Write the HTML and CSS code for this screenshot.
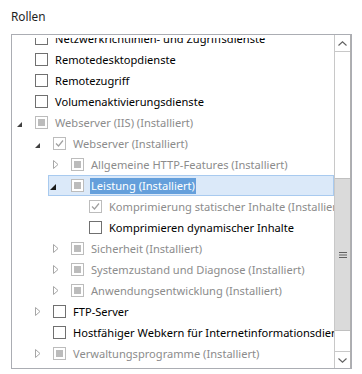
FILE: index.html
```html
<!DOCTYPE html>
<html>
<head>
<meta charset="utf-8">
<link rel="stylesheet" href="styles.css">
</head>
<body>
<div class="panel">
  <div class="title">Rollen</div>
  <div class="box">
    <div class="tree">
      <ul class="rows">
        <li class="row l1"><span class="exp"></span><span class="cb"></span><span class="label">Netzwerkrichtlinien- und Zugriffsdienste</span></li>
        <li class="row l1"><span class="exp"></span><span class="cb"></span><span class="label">Remotedesktopdienste</span></li>
        <li class="row l1"><span class="exp"></span><span class="cb"></span><span class="label">Remotezugriff</span></li>
        <li class="row l1"><span class="exp"></span><span class="cb"></span><span class="label">Volumenaktivierungsdienste</span></li>
        <li class="row l1 dis"><span class="exp"><svg class="open" width="5" height="5" viewBox="0 0 5 5"><polygon points="5,0 5,5 0,5"/></svg></span><span class="cb ind"></span><span class="label">Webserver (IIS) (Installiert)</span></li>
        <li class="row l2 dis"><span class="exp"><svg class="open" width="5" height="5" viewBox="0 0 5 5"><polygon points="5,0 5,5 0,5"/></svg></span><span class="cb chk"><svg width="11" height="11" viewBox="0 0 11 11"><polyline points="2,5.5 4.5,8 9,2.5" fill="none" stroke="#a0a0a0" stroke-width="1.2"/></svg></span><span class="label">Webserver (Installiert)</span></li>
        <li class="row l3 dis"><span class="exp"><svg class="closed" width="6" height="9" viewBox="0 0 6 9"><polygon points="0.5,0.5 5,4.5 0.5,8.5"/></svg></span><span class="cb ind"></span><span class="label">Allgemeine HTTP-Features (Installiert)</span></li>
        <li class="row l3 dis sel"><span class="exp"><svg class="open big" width="6" height="6" viewBox="0 0 6 6"><polygon points="6,0 6,6 0,6"/></svg></span><span class="cb ind"></span><span class="label">Leistung (Installiert)</span></li>
        <li class="row l4 dis"><span class="exp"></span><span class="cb chk"><svg width="11" height="11" viewBox="0 0 11 11"><polyline points="2,5.5 4.5,8 9,2.5" fill="none" stroke="#a0a0a0" stroke-width="1.2"/></svg></span><span class="label">Komprimierung statischer Inhalte (Installiert)</span></li>
        <li class="row l4"><span class="exp"></span><span class="cb"></span><span class="label">Komprimieren dynamischer Inhalte</span></li>
        <li class="row l3 dis"><span class="exp"><svg class="closed" width="6" height="9" viewBox="0 0 6 9"><polygon points="0.5,0.5 5,4.5 0.5,8.5"/></svg></span><span class="cb ind"></span><span class="label">Sicherheit (Installiert)</span></li>
        <li class="row l3 dis"><span class="exp"><svg class="closed" width="6" height="9" viewBox="0 0 6 9"><polygon points="0.5,0.5 5,4.5 0.5,8.5"/></svg></span><span class="cb ind"></span><span class="label">Systemzustand und Diagnose (Installiert)</span></li>
        <li class="row l3 dis"><span class="exp"><svg class="closed" width="6" height="9" viewBox="0 0 6 9"><polygon points="0.5,0.5 5,4.5 0.5,8.5"/></svg></span><span class="cb ind"></span><span class="label">Anwendungsentwicklung (Installiert)</span></li>
        <li class="row l2"><span class="exp"><svg class="closed" width="6" height="9" viewBox="0 0 6 9"><polygon points="0.5,0.5 5,4.5 0.5,8.5"/></svg></span><span class="cb"></span><span class="label">FTP-Server</span></li>
        <li class="row l2"><span class="exp"></span><span class="cb"></span><span class="label">Hostfähiger Webkern für Internetinformationsdienste</span></li>
        <li class="row l2 dis"><span class="exp"><svg class="closed" width="6" height="9" viewBox="0 0 6 9"><polygon points="0.5,0.5 5,4.5 0.5,8.5"/></svg></span><span class="cb ind"></span><span class="label">Verwaltungsprogramme (Installiert)</span></li>
      </ul>
    </div>
    <div class="scrollbar">
      <div class="sbtn up"><svg width="9" height="5" viewBox="0 0 9 5"><polyline points="0.5,4.5 4.5,0.8 8.5,4.5" fill="none" stroke="#606060" stroke-width="1.1"/></svg></div>
      <div class="track">
        <div class="gap-top"></div>
        <div class="thumb"><svg width="8" height="6" viewBox="0 0 8 6"><rect x="0" y="0" width="8" height="1" fill="#606060"/><rect x="0" y="2.5" width="8" height="1" fill="#606060"/><rect x="0" y="5" width="8" height="1" fill="#606060"/></svg></div>
        <div class="gap-bottom"></div>
      </div>
      <div class="sbtn down"><svg width="9" height="5" viewBox="0 0 9 5"><polyline points="0.5,0.5 4.5,4.2 8.5,0.5" fill="none" stroke="#606060" stroke-width="1.1"/></svg></div>
    </div>
  </div>
</div>
</body>
</html>
```

FILE: styles.css
```css
* { box-sizing: border-box; }
body {
  margin: 0;
  background: #ffffff;
  font-family: "Noto Sans", "Open Sans", "DejaVu Sans", sans-serif;
  font-size: 11.1px;
  color: #000;
}
.panel {
  padding: 8px 0 0 11px;
  width: 352px;
}
.title {
  height: 26px;
  line-height: 16px;
  color: #1e1e1e;
  font-size: 11.8px;
}
.box {
  width: 341px;
  height: 335px;
  border: 1px solid #abadb3;
  display: flex;
  background: #fff;
}
.tree {
  flex: 1;
  overflow: hidden;
  margin-top: 3px;
}
.rows {
  list-style: none;
  margin: -10px 0 0;
  padding: 0;
}
.row {
  height: 21px;
  display: flex;
  align-items: center;
  white-space: nowrap;
  overflow: hidden;
}
.l2 { margin-left: 18px; }
.l3 { margin-left: 36px; }
.l4 { margin-left: 54px; }
.exp {
  width: 23px;
  height: 21px;
  flex: none;
  display: flex;
  align-items: center;
  padding-left: 5px;
}
.exp svg.open { fill: #404040; margin-top: 3px; }
.exp svg.open.big { fill: #1a1a1a; margin-left: -3px; margin-top: 2px; }
.exp svg.closed { fill: none; stroke: #a6a6a6; stroke-width: 1; }
.cb {
  width: 13px;
  height: 13px;
  flex: none;
  border: 1px solid #707070;
  background: #fff;
  margin-right: 7px;
  display: flex;
  align-items: center;
  justify-content: center;
}
.dis .cb { border-color: #bcbcbc; }
.cb.ind::before {
  content: "";
  width: 7px;
  height: 7px;
  background: #bcbcbc;
}
.label { line-height: 16px; }
.dis .label { color: #8c8c8c; }
.sel {
  background: #dbe9f9;
  box-shadow: inset 0 0 0 1px #a8caef;
}
.sel .label {
  background: #649fdb;
  color: #ffffff;
  padding: 0 1px;
  margin-left: -1px;
}
.scrollbar {
  width: 17px;
  flex: none;
  display: flex;
  flex-direction: column;
  border-left: 1px solid #c8c8c8;
  border-right: 1px solid #b0b0b0;
}
.sbtn {
  height: 17px;
  flex: none;
  display: flex;
  align-items: center;
  justify-content: center;
  background: #fff;
}
.sbtn.up { border-bottom: 1px solid #c8c8c8; }
.sbtn.down { border-top: 1px solid #c8c8c8; }
.track {
  flex: 1;
  display: flex;
  flex-direction: column;
}
.gap-top { height: 126px; flex: none; }
.thumb {
  height: 153px;
  flex: none;
  background: #dadada;
  border-top: 1px solid #c0c0c0;
  border-bottom: 1px solid #c0c0c0;
  display: flex;
  align-items: center;
  justify-content: center;
}
.gap-bottom { flex: 1; }
```
